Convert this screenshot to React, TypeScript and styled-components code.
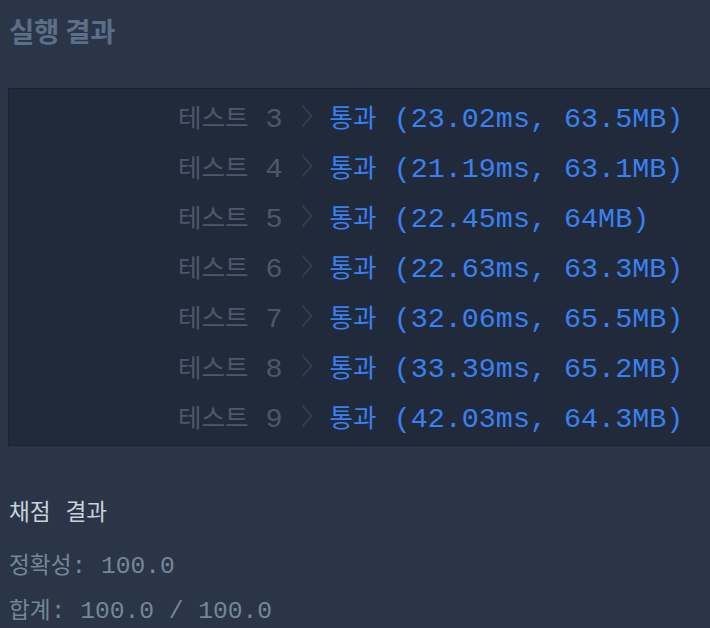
import React from "react";
import styled, { createGlobalStyle } from "styled-components";

const GlobalStyle = createGlobalStyle`
  html, body {
    margin: 0;
    padding: 0;
    background: #2a3547;
  }
  #root {
    overflow: hidden;
  }
`;

const Page = styled.div`
  width: 710px;
  height: 628px;
  overflow: hidden;
  background: #2a3547;
  padding-left: 8px;
  box-sizing: border-box;
  font-family: "Liberation Mono", "Noto Sans CJK KR", monospace;
`;

const Header = styled.div`
  height: 88px;
  box-sizing: border-box;
  padding-top: 12px;
  padding-left: 1px;
`;

const HeaderTitle = styled.h2`
  margin: 0;
  font-family: "Noto Sans CJK KR", "Noto Sans", sans-serif;
  font-weight: 700;
  font-size: 27.5px;
  line-height: 36px;
  color: #5b6f89;
  letter-spacing: -0.2px;
`;

const Console = styled.div`
  margin-right: -40px;
  background: #212a3b;
  border: 1px solid #1b2332;
  border-right: none;
  padding: 2px 0 4px 169px;
`;

const Row = styled.div`
  height: 50px;
  display: flex;
  align-items: center;
  font-size: 28.4px;
  white-space: pre;
`;

const Hangul = styled.span<{ $scale?: number }>`
  font-family: "Noto Sans CJK KR", sans-serif;
  font-size: ${(p) => p.$scale ?? 0.9}em;
`;

const Label = styled.span`
  color: #4b586b;
  white-space: pre;
`;

const Chevron = styled.svg`
  width: 12px;
  height: 24px;
  margin: 0 17px 0 18px;
  flex: none;
`;

const Pass = styled.span`
  color: #3a80f2;
  white-space: pre;
`;

const Summary = styled.div`
  padding-top: 45px;
  padding-left: 1px;
`;

const SummaryTitle = styled.div`
  height: 40px;
  line-height: 40px;
  font-size: 24.6px;
  color: #c9d1da;
  white-space: pre;
`;

const SummaryLine = styled.div<{ $gap: number }>`
  margin-top: ${(p) => p.$gap}px;
  height: 40px;
  line-height: 40px;
  font-size: 24.6px;
  color: #74879a;
  white-space: pre;
`;

const tests = [
  { n: 3, t: "23.02ms", m: "63.5MB" },
  { n: 4, t: "21.19ms", m: "63.1MB" },
  { n: 5, t: "22.45ms", m: "64MB" },
  { n: 6, t: "22.63ms", m: "63.3MB" },
  { n: 7, t: "32.06ms", m: "65.5MB" },
  { n: 8, t: "33.39ms", m: "65.2MB" },
  { n: 9, t: "42.03ms", m: "64.3MB" },
];

export default function App() {
  return (
    <>
      <GlobalStyle />
      <Page>
        <Header>
          <HeaderTitle>실행 결과</HeaderTitle>
        </Header>
        <Console>
          {tests.map((r) => (
            <Row key={r.n}>
              <Label>
                <Hangul>테스트</Hangul>{" " + r.n}
              </Label>
              <Chevron viewBox="0 0 12 24">
                <path d="M1.5 1.5 L10.5 12 L1.5 22.5" fill="none" stroke="#364256" strokeWidth="1.4" />
              </Chevron>
              <Pass>
                <Hangul>통과</Hangul>{` (${r.t}, ${r.m})`}
              </Pass>
            </Row>
          ))}
        </Console>
        <Summary>
          <SummaryTitle>
            <Hangul $scale={0.92}>채점</Hangul> <Hangul $scale={0.92}>결과</Hangul>
          </SummaryTitle>
          <SummaryLine $gap={13}>
            <Hangul $scale={0.92}>정확성</Hangul>: 100.0
          </SummaryLine>
          <SummaryLine $gap={5}>
            <Hangul $scale={0.92}>합계</Hangul>: 100.0 / 100.0
          </SummaryLine>
        </Summary>
      </Page>
    </>
  );
}
